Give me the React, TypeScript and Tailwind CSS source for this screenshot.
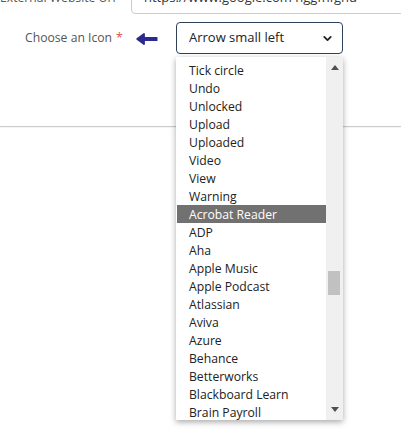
import { ChevronDown } from "lucide-react";

const ICONS = [
  "Tick circle",
  "Undo",
  "Unlocked",
  "Upload",
  "Uploaded",
  "Video",
  "View",
  "Warning",
  "Acrobat Reader",
  "ADP",
  "Aha",
  "Apple Music",
  "Apple Podcast",
  "Atlassian",
  "Aviva",
  "Azure",
  "Behance",
  "Betterworks",
  "Blackboard Learn",
  "Brain Payroll",
];

function BackArrow() {
  return (
    <svg width="22" height="12" viewBox="0 0 22 12" className="text-[#2d2a8e]">
      <path d="M1.2 6 L8 1 L8 11 Z" fill="currentColor" stroke="currentColor" strokeWidth="1.8" strokeLinejoin="round" />
      <rect x="7" y="4" width="14.5" height="4" rx="0.6" fill="currentColor" />
    </svg>
  );
}

export default function App() {
  return (
    <div className="relative h-[433px] w-[401px] overflow-hidden bg-white font-['Open_Sans',sans-serif]">
      {/* url row, scrolled mostly out of view */}
      <div className="-mt-[18px] flex items-center">
        <div className="w-[106px] shrink-0 whitespace-nowrap text-right text-[12.2px] text-[#555]">External Website Url</div>
        <div className="ml-[25px] flex h-[32px] w-[290px] shrink-0 items-center whitespace-nowrap rounded border border-[#ccc] px-[12px] text-[13px] text-[#333]">
          https://www.google.com nggfnfgnd
        </div>
      </div>

      {/* icon row */}
      <div className="mt-[8px] flex items-center">
        <div className="flex w-[136px] shrink-0 items-center pl-[25px] text-[12.2px] text-[#555]">
          Choose an Icon<span className="ml-[4px] text-[#d9534f]">*</span>
        </div>
        <div className="w-[40px] shrink-0 pt-[1px]">
          <BackArrow />
        </div>
        <div className="flex h-[32px] w-[167px] shrink-0 items-center justify-between rounded border border-[#2f4258] pl-[12px] pr-[8px] text-[13px] text-[#222]">
          <span>Arrow small left</span>
          <ChevronDown size={13} strokeWidth={3.4} className="text-[#222]" />
        </div>
      </div>

      <div className="mt-[72px] h-px w-full bg-[#ccc] shadow-[0_1px_1px_rgba(0,0,0,0.05)]" />

      {/* open dropdown list */}
      <div className="absolute left-[176px] top-[57px] flex h-[363px] w-[167px] overflow-hidden bg-white shadow-[0_2px_6px_rgba(0,0,0,0.35)]">
        <ul className="flex-1 pt-[4px] pl-[1px] text-[12.2px] leading-[18px] text-[#222]">
          {ICONS.map((name) => (
            <li
              key={name}
              className={
                name === "Acrobat Reader"
                  ? "h-[18px] whitespace-nowrap bg-[#717171] pl-[12px] pt-[1px] leading-[17px] text-white"
                  : "h-[18px] whitespace-nowrap pl-[12px] pt-[1px] leading-[17px]"
              }
            >
              {name}
            </li>
          ))}
        </ul>
        <div className="flex w-[17px] shrink-0 flex-col bg-[#f0f0f0]">
          <div className="flex h-[17px] items-center justify-center pt-[4px]">
            <svg width="8" height="5" viewBox="0 0 8 5">
              <path d="M0 5 L4 0 L8 5 Z" fill="#505050" />
            </svg>
          </div>
          <div className="flex-1 px-[2px]">
            <div className="mt-[197px] h-[24px] w-[12px] bg-[#c1c1c1]" />
          </div>
          <div className="flex h-[17px] items-center justify-center pb-[4px]">
            <svg width="8" height="5" viewBox="0 0 8 5">
              <path d="M0 0 L4 5 L8 0 Z" fill="#505050" />
            </svg>
          </div>
        </div>
      </div>
    </div>
  );
}
